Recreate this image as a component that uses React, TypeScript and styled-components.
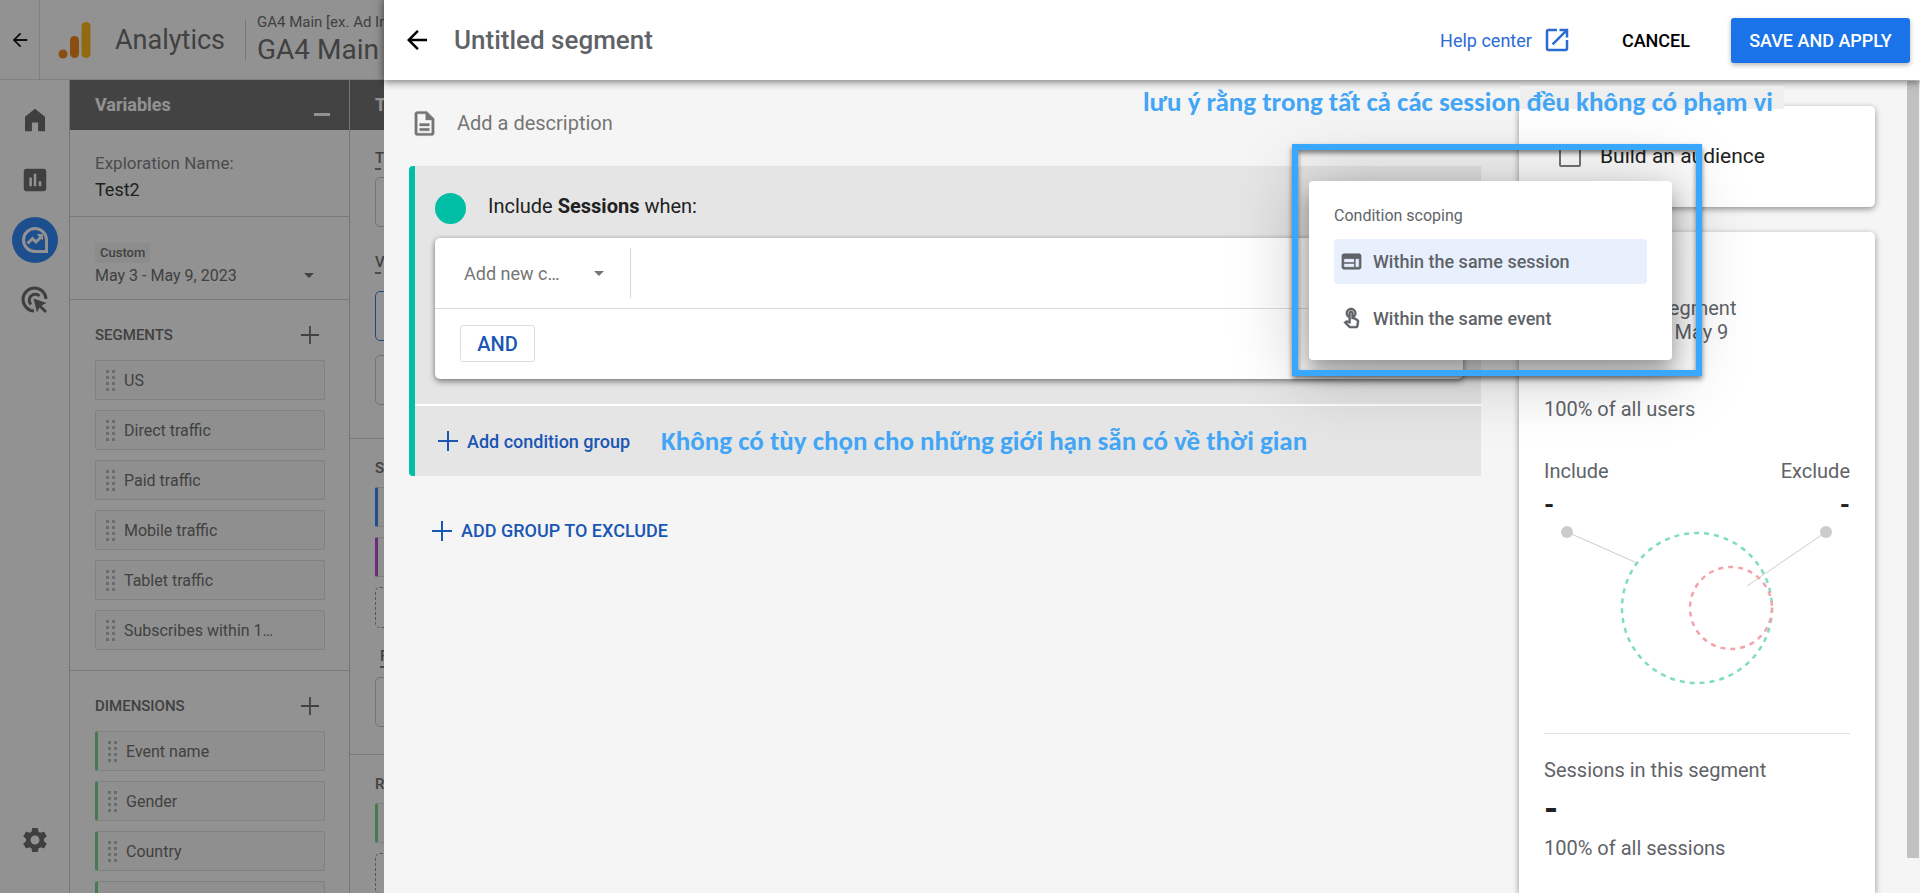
import React from 'react';
import styled, { createGlobalStyle } from 'styled-components';

const Global = createGlobalStyle`
  *, *::before, *::after { box-sizing: border-box; }
  html, body { margin: 0; height: 100%; overflow: hidden; }
  body { font-family: Roboto, "Liberation Sans", sans-serif; color: #5f6368; }
  #root { height: 100%; }
  button, input, select { font-family: inherit; }
  h1, h2, h3, p, ul { margin: 0; padding: 0; font-weight: 400; }
  li { list-style: none; }
`;

const Stage = styled.div`
  position: relative;
  height: 100vh;
  overflow: hidden;
  background: #fff;
`;

/* ---------- page behind the drawer ---------- */

const Page = styled.div`
  display: flex;
  flex-direction: column;
  height: 100%;
`;

const PageHeader = styled.header`
  display: flex;
  align-items: center;
  flex: none;
  height: 80px;
  border-bottom: 1px solid #dadce0;
  white-space: nowrap;
`;

const BackCell = styled.button`
  display: flex;
  align-items: center;
  justify-content: center;
  width: 40px;
  height: 100%;
  padding: 0;
  background: none;
  border: 0;
  border-right: 1px solid #dadce0;
`;

const Brand = styled.div`
  display: flex;
  align-items: center;
  gap: 23px;
  padding: 0 20px 0 18px;
  font-size: 27px;
  line-height: 40px;
  color: #606060;
`;

const Property = styled.div`
  display: flex;
  flex-direction: column;
  height: 40px;
  justify-content: center;
  padding: 0 0 4px 11px;
  border-left: 1px solid #c4c6ca;
  color: #606060;
`;

const PropertySmall = styled.span`
  font-size: 15px;
  line-height: 24px;
`;

const PropertyLarge = styled.span`
  font-size: 28px;
  line-height: 32px;
`;

const PageBody = styled.div`
  display: flex;
  flex: 1;
  min-height: 0;
  color: #606060;
`;

const Rail = styled.nav`
  display: flex;
  flex-direction: column;
  align-items: center;
  flex: none;
  width: 70px;
  padding: 17px 0 30px;
  border-right: 1px solid #c4c4c4;
`;

const RailButton = styled.button<{ $active?: boolean; $last?: boolean }>`
  display: flex;
  align-items: center;
  justify-content: center;
  flex: none;
  width: 46px;
  height: 46px;
  margin: ${p => (p.$last ? 'auto 0 0' : '0 0 14px')};
  padding: 0;
  border: 0;
  border-radius: 50%;
  background: ${p => (p.$active ? '#1a7af5' : 'transparent')};
  color: ${p => (p.$active ? '#fff' : '#5c5c5c')};
`;

const Column = styled.section`
  flex: none;
  width: 280px;
  border-right: 1px solid #c4c4c4;
  overflow: hidden;
`;

const ColumnHead = styled.div`
  display: flex;
  justify-content: space-between;
  height: 50px;
  padding: 11px 19px 0 25px;
  background: #656565;
  color: #fff;
`;

const ColumnTitle = styled.h2`
  font-size: 18px;
  line-height: 28px;
  font-weight: 700;
`;

const Minimize = styled.button`
  width: 16px;
  height: 25px;
  padding: 0;
  background: none;
  border: 0;
  border-bottom: 3px solid #fff;
`;

const Block = styled.div<{ $pad: string }>`
  padding: ${p => p.$pad};
  border-bottom: 1px solid #cfcfcf;
`;

const Label = styled.label`
  display: block;
  font-size: 17px;
  line-height: 26px;
  color: #757575;
`;

const NameInput = styled.input`
  display: block;
  width: 100%;
  height: 26px;
  padding: 0;
  border: 0;
  background: none;
  font-size: 18px;
  color: #212121;
`;

const Chip = styled.span`
  display: inline-block;
  padding: 0 5px;
  background: #f3f3f3;
  border-radius: 2px;
  font-size: 13px;
  line-height: 20px;
  font-weight: 500;
`;

const DateButton = styled.button`
  display: flex;
  align-items: center;
  justify-content: space-between;
  width: 100%;
  height: 24px;
  padding: 0 11px 0 0;
  border: 0;
  background: none;
  font-size: 16px;
  color: inherit;
`;

const Caret = styled.span`
  border: 5px solid transparent;
  border-top-color: currentColor;
  border-bottom-width: 0;
`;

const GroupHead = styled.div`
  display: flex;
  align-items: center;
  justify-content: space-between;
  height: 24px;
  padding-right: 6px;
`;

const GroupTitle = styled.h3`
  font-size: 15px;
  line-height: 24px;
  font-weight: 500;
`;

const IconButton = styled.button<{ $dark?: boolean }>`
  display: flex;
  padding: 0;
  border: 0;
  background: none;
  color: ${p => (p.$dark ? '#000' : '#5f6368')};
`;

const TagList = styled.ul<{ $top?: string }>`
  display: flex;
  flex-direction: column;
  gap: 10px;
  margin-top: ${p => p.$top || '13px'};
`;

const Tag = styled.li<{ $accent?: string }>`
  display: flex;
  align-items: center;
  gap: 7px;
  height: 40px;
  padding-left: 9px;
  border: 1px solid #dcdcdc;
  border-left: ${p => (p.$accent ? `3px solid ${p.$accent}` : '1px solid #dcdcdc')};
  border-radius: 2px;
  background: #fafafa;
  font-size: 16px;
  white-space: nowrap;
`;

const SettingName = styled.h3<{ $top?: string; $inset?: boolean }>`
  width: max-content;
  margin-top: ${p => p.$top || '0'};
  margin-left: ${p => (p.$inset ? '5px' : '0')};
  border-bottom: 2px dashed #757575;
  font-size: 15px;
  line-height: 20px;
  font-weight: 500;
  white-space: nowrap;
`;

const Slot = styled.div<{ $tone?: string; $dashed?: boolean; $top: string }>`
  height: ${p => (p.$dashed ? '41px' : '50px')};
  margin-top: ${p => p.$top};
  border: 1px ${p => (p.$dashed ? 'dashed #8a8a8a' : `solid ${p.$tone || '#c4c4c4'}`)};
  border-radius: 5px;
`;

const Scrim = styled.div`
  position: absolute;
  inset: 0;
  background: rgba(32, 32, 32, 0.49);
`;

/* ---------- drawer ---------- */

const Drawer = styled.main`
  position: absolute;
  inset: 0 0 0 384px;
  display: flex;
  flex-direction: column;
  background: #f5f5f5;
`;

const DrawerHeader = styled.header`
  position: relative;
  z-index: 1;
  display: flex;
  align-items: center;
  flex: none;
  height: 80px;
  padding: 0 10px 0 18px;
  background: #fff;
  box-shadow: 0 1px 8px 1px rgba(0, 0, 0, 0.5);
`;

const DrawerTitle = styled.h1`
  flex: 1;
  margin-left: 22px;
  font-size: 26px;
  line-height: 32px;
  font-weight: 500;
`;

const HelpLink = styled.a`
  display: flex;
  align-items: center;
  gap: 10px;
  margin-right: 50px;
  color: #2a6bd4;
  font-size: 18px;
  text-decoration: none;
`;

const CancelButton = styled.button`
  margin-right: 41px;
  padding: 0;
  border: 0;
  background: none;
  color: #000;
  font-size: 18px;
  font-weight: 500;
`;

const ApplyButton = styled.button`
  width: 179px;
  height: 45px;
  padding: 0;
  border: 0;
  border-radius: 3px;
  background: #1a73e8;
  box-shadow: 0 2px 5px rgba(0, 0, 0, 0.3);
  color: #fff;
  font-size: 18px;
  font-weight: 500;
  white-space: nowrap;
`;

const DrawerBody = styled.div`
  display: flex;
  flex: 1;
  min-height: 0;
`;

const Builder = styled.div`
  flex: 1;
  min-width: 0;
  padding: 24px 38px 0 25px;
`;

const DescriptionRow = styled.label`
  display: flex;
  align-items: center;
  gap: 18px;
  height: 38px;
  padding-left: 1px;
  color: #757575;
`;

const DescriptionInput = styled.input`
  flex: 1;
  padding: 0;
  border: 0;
  background: none;
  font-size: 20px;
  &::placeholder { color: #757575; opacity: 1; }
`;

const Group = styled.section`
  margin-top: 24px;
  border-left: 6px solid #00bfa5;
  border-radius: 4px 0 0 4px;
  background: #e5e5e5;
`;

const Conditions = styled.div`
  padding: 22px 18px 25px 20px;
  border-bottom: 2px solid #fff;
`;

const GroupLine = styled.h2`
  display: flex;
  align-items: center;
  gap: 22px;
  height: 36px;
  color: #212121;
  font-size: 20px;
  line-height: 32px;
`;

const Dot = styled.span`
  width: 31px;
  height: 31px;
  margin-top: 4px;
  border-radius: 50%;
  background: #00bfa5;
`;

const Card = styled.div`
  margin-top: 14px;
  border-radius: 5px;
  background: #fff;
  box-shadow: 0 3px 6px rgba(0, 0, 0, 0.38), 0 0 4px rgba(0, 0, 0, 0.2);
`;

const ConditionRow = styled.div`
  height: 71px;
  padding-top: 10px;
  border-bottom: 1px solid #dcdcdc;
`;

const NewCondition = styled.button`
  display: flex;
  align-items: center;
  justify-content: space-between;
  width: 196px;
  height: 50px;
  padding: 0 26px 0 29px;
  border: 0;
  border-right: 1px solid #d6d6d6;
  background: none;
  color: #757575;
  font-size: 18px;
`;

const AndRow = styled.div`
  padding: 16px 25px 17px;
`;

const AndButton = styled.button`
  display: block;
  width: 75px;
  height: 37px;
  padding: 0;
  border: 1px solid #dadce0;
  border-radius: 3px;
  background: #fff;
  color: #1a56b4;
  font-size: 20px;
  font-weight: 500;
`;

const GroupFooter = styled.div`
  display: flex;
  align-items: center;
  gap: 31px;
  height: 70px;
  padding-left: 23px;
`;

const AddButton = styled.button`
  display: flex;
  align-items: center;
  gap: 9px;
  padding: 0;
  border: 0;
  background: none;
  color: #1a56b4;
  font-size: 18px;
  font-weight: 500;
  white-space: nowrap;
`;

const ExcludeRow = styled.div`
  padding: 44px 0 0 23px;
`;

const Note = styled.p`
  color: #42a5f5;
  font-family: Carlito, Lato, "Noto Sans", sans-serif;
  font-size: 27px;
  line-height: 32px;
  font-weight: 700;
  white-space: nowrap;
`;

const Side = styled.aside`
  display: flex;
  flex-direction: column;
  gap: 25px;
  flex: none;
  width: 356px;
  margin-right: 32px;
  padding-top: 26px;
`;

const SideCard = styled.section<{ $grow?: boolean }>`
  flex: ${p => (p.$grow ? '1' : 'none')};
  padding: ${p => (p.$grow ? '64px 25px 0' : '0')};
  border-radius: ${p => (p.$grow ? '5px 5px 0 0' : '5px')};
  background: #fff;
  box-shadow: 0 2px 6px rgba(0, 0, 0, 0.42);
`;

const Audience = styled.label`
  display: flex;
  align-items: center;
  gap: 19px;
  height: 101px;
  padding: 0 0 2px 40px;
  color: #212121;
  font-size: 21px;
`;

const Tick = styled.input`
  appearance: none;
  width: 22px;
  height: 22px;
  margin: 0;
  border: 2px solid #757575;
  border-radius: 2px;
`;

const SummaryText = styled.p`
  font-size: 20px;
  line-height: 24px;
`;

const Share = styled(SummaryText)`
  margin-top: 53px;
`;

const Split = styled.div<{ $top: string }>`
  display: flex;
  justify-content: space-between;
  margin-top: ${p => p.$top};
  font-size: 20px;
  line-height: 24px;
`;

const Value = styled.strong<{ $big?: boolean }>`
  display: block;
  font-size: ${p => (p.$big ? '36px' : '26px')};
  line-height: 24px;
  font-weight: 700;
  color: #212121;
`;

const Chart = styled.svg`
  display: block;
  width: 306px;
  height: 175px;
`;

const Totals = styled.div`
  display: flex;
  flex-direction: column;
  gap: 15px;
  margin-top: 41px;
  padding-top: 24px;
  border-top: 1px solid #e0e0e0;
`;

const ScrollTrack = styled.div`
  flex: none;
  width: 13px;
  padding-top: 1px;
`;

const ScrollThumb = styled.div`
  width: 12px;
  height: calc(100% - 35px);
  background: #c1c1c1;
`;

/* ---------- overlays ---------- */

const TopNote = styled(Note)`
  position: absolute;
  z-index: 2;
  top: 86px;
  right: 136px;
  padding-right: 11px;
  background: linear-gradient(#efefef, #efefef) top right / 264px 23px no-repeat;
`;

const Frame = styled.div`
  position: absolute;
  z-index: 3;
  top: 144px;
  right: 218px;
  width: 410px;
  height: 232px;
  border: 6px solid #38a7ff;
  box-shadow: 0 3px 5px rgba(0, 0, 0, 0.5), inset 0 3px 5px rgba(0, 0, 0, 0.5);
  pointer-events: none;
`;

const Menu = styled.div`
  position: absolute;
  z-index: 2;
  top: 181px;
  right: 248px;
  width: 363px;
  height: 179px;
  padding: 22px 25px 0;
  border-radius: 4px;
  background: #fff;
  box-shadow: 0 12px 20px rgba(0, 0, 0, 0.3), 0 6px 70px 10px rgba(0, 0, 0, 0.22);
`;

const MenuTitle = styled.h3`
  font-size: 16px;
  line-height: 26px;
`;

const MenuItems = styled.div`
  display: flex;
  flex-direction: column;
  gap: 12px;
  margin-top: 10px;
`;

const MenuItem = styled.button<{ $selected?: boolean }>`
  display: flex;
  align-items: center;
  gap: 10px;
  height: 45px;
  padding: 0 6px;
  border: 0;
  border-radius: 4px;
  background: ${p => (p.$selected ? '#e8f0fe' : 'transparent')};
  color: #5f6368;
  font-size: 18px;
  font-weight: 500;
`;

/* ---------- icons ---------- */

const Icon = ({ d, size = 24, bold = 0 }: { d: string; size?: number; bold?: number }) => (
  <svg
    width={size}
    height={size}
    viewBox="0 0 24 24"
    fill="currentColor"
    stroke={bold ? 'currentColor' : 'none'}
    strokeWidth={bold}
    aria-hidden="true"
  >
    <path d={d} fillRule="evenodd" />
  </svg>
);

const ARROW = 'M20 11H7.83l5.59-5.59L12 4l-8 8 8 8 1.41-1.41L7.83 13H20v-2z';
const HOME = 'M4 9.3 12 3l8 6.3V21h-5.500v-7h-5v7H4z';
const REPORT = 'M19 3H5c-1.100 0-2 .9-2 2v14c0 1.100.9 2 2 2h14c1.100 0 2-.9 2-2V5c0-1.100-.9-2-2-2zM9.500 17h-2v-7h2v7zm3.500 0h-2V7h2v10zm4 0h-2v-4h2v4z';
const GEAR =
  'M19.14 12.94c.04-.3.06-.61.06-.94 0-.32-.02-.64-.07-.94l2.03-1.58c.18-.14.23-.41.12-.61l-1.92-3.32c-.12-.22-.37-.29-.59-.22l-2.39.96c-.5-.38-1.03-.7-1.62-.94l-.36-2.54c-.04-.24-.24-.41-.48-.41h-3.84c-.24 0-.43.17-.47.41l-.36 2.54c-.59.24-1.13.57-1.62.94l-2.39-.96c-.22-.08-.47 0-.59.22L2.74 8.870c-.12.21-.08.47.12.61l2.03 1.58c-.05.3-.09.63-.09.94s.02.64.07.94l-2.03 1.580c-.18.14-.23.41-.12.61l1.920 3.320c.12.22.37.29.59.22l2.39-.96c.5.38 1.03.7 1.620.94l.36 2.540c.05.24.24.41.48.41h3.840c.24 0 .44-.17.47-.41l.36-2.540c.59-.24 1.130-.56 1.620-.94l2.390.96c.22.08.47 0 .59-.22l1.920-3.320c.12-.22.07-.47-.12-.61l-2.010-1.580zM12 15.600c-1.980 0-3.600-1.620-3.600-3.600s1.620-3.600 3.600-3.600 3.600 1.620 3.600 3.600-1.620 3.600-3.600 3.600z';
const NEW_TAB = 'M19 19H5V5h7V3H5c-1.110 0-2 .9-2 2v14c0 1.100.89 2 2 2h14c1.100 0 2-.9 2-2v-7h-2v7zM14 3v2h3.590l-9.830 9.830 1.410 1.410L19 6.410V10h2V3h-7z';
const DOC = 'M8 16h8v2H8zm0-4h8v2H8zm6-10H6c-1.100 0-2 .9-2 2v16c0 1.100.89 2 1.990 2H18c1.100 0 2-.9 2-2V8l-6-6zm4 18H6V4h7v5h5v11z';
const WEB = 'M20 4H4c-1.100 0-1.990.9-1.990 2L2 18c0 1.100.9 2 2 2h16c1.100 0 2-.9 2-2V6c0-1.100-.9-2-2-2zm-5 14H4v-4h11v4zm0-5H4V9h11v4zm5 5h-4V9h4v9z';
const TOUCH =
  'M18.190 12.440l-3.240-1.620c1.290-1 2.120-2.560 2.120-4.320 0-3.030-2.470-5.500-5.500-5.500s-5.500 2.470-5.500 5.500c0 2.130 1.220 3.980 3 4.890v3.260c-2.150-.46-2.020-.44-2.260-.44-.53 0-1.030.21-1.410.59L4 16.220l5.090 5.090c.43.44 1.030.69 1.650.69h6.300c.98 0 1.810-.7 1.970-1.670l.8-4.710c.22-1.300-.43-2.580-1.620-3.180zm-.35 2.850l-.8 4.710h-6.300c-.09 0-.17-.04-.24-.1l-3.680-3.680 4.250.89V6.500c0-.28.22-.5.5-.5s.5.22.5.5v6h1.760l3.460 1.730c.4.2.62.63.55 1.060zM8.070 6.500c0-1.930 1.570-3.500 3.500-3.500s3.500 1.570 3.500 3.500c0 .95-.38 1.810-1 2.440V6.500c0-1.380-1.120-2.500-2.500-2.500s-2.500 1.120-2.500 2.500v2.440c-.62-.63-1-1.490-1-2.440z';

const Plus = ({ size = 20 }: { size?: number }) => (
  <svg width={size} height={size} viewBox="0 0 20 20" stroke="currentColor" strokeWidth="2" aria-hidden="true">
    <path d="M10 0v20M0 10h20" />
  </svg>
);

const Logo = () => (
  <svg width="34" height="38" viewBox="0 0 34 38" aria-hidden="true">
    <circle cx="5" cy="33" r="4.500" fill="#ee7a00" />
    <rect x="12" y="15" width="9" height="22" rx="4.500" fill="#ee7a00" />
    <rect x="23.500" y="1" width="9" height="36" rx="4.500" fill="#fdb005" />
  </svg>
);

const Explore = () => (
  <svg width="28" height="28" viewBox="0 0 28 28" fill="none" stroke="currentColor" strokeWidth="3" aria-hidden="true">
    <path d="M14 25.500A11.500 11.500 0 1 1 25.500 14v11.500z" />
    <path d="M6.500 17.500l5-5 3.500 3.500 5-5" />
    <path d="M16.500 8.500h5v5z" fill="currentColor" strokeWidth="1" />
    <circle cx="22.500" cy="23" r="1" fill="#1a7af5" stroke="none" />
  </svg>
);

const Advertising = () => (
  <svg width="28" height="28" viewBox="0 0 28 28" fill="none" stroke="currentColor" strokeWidth="3" aria-hidden="true">
    <path d="M13 25A11.500 11.500 0 1 1 25 13" />
    <path d="M10 18.500A6 6 0 1 1 18.500 10" />
    <path d="M12.500 12.500l13 4.500-5 2.500 5.500 5.500-2 2-5.500-5.500-2.500 5z" fill="currentColor" stroke="none" />
  </svg>
);

const Grip = () => (
  <svg width="12" height="22" viewBox="0 0 12 22" fill="#b4b4b4" aria-hidden="true">
    {[0, 6, 12, 18].map(y => (
      <React.Fragment key={y}>
        <rect x="1" y={y + 1} width="3" height="3" />
        <rect x="7" y={y + 1} width="3" height="3" />
      </React.Fragment>
    ))}
  </svg>
);

const segments = ['US', 'Direct traffic', 'Paid traffic', 'Mobile traffic', 'Tablet traffic', 'Subscribes within 1…'];
const dimensions = ['Event name', 'Gender', 'Country'];
const GREEN = '#6bd07f';

export default function App() {
  return (
    <Stage>
      <Global />
      <Page>
        <PageHeader>
          <BackCell aria-label="Back"><Icon d={ARROW} size={22} /></BackCell>
          <Brand><Logo />Analytics</Brand>
          <Property>
            <PropertySmall>GA4 Main [ex. Ad Int]</PropertySmall>
            <PropertyLarge>GA4 Main</PropertyLarge>
          </Property>
        </PageHeader>
        <PageBody>
          <Rail>
            <RailButton aria-label="Home"><Icon d={HOME} size={30} /></RailButton>
            <RailButton aria-label="Reports"><Icon d={REPORT} size={30} /></RailButton>
            <RailButton aria-label="Explore" $active><Explore /></RailButton>
            <RailButton aria-label="Advertising"><Advertising /></RailButton>
            <RailButton aria-label="Admin" $last><Icon d={GEAR} size={30} /></RailButton>
          </Rail>
          <Column>
            <ColumnHead>
              <ColumnTitle>Variables</ColumnTitle>
              <Minimize aria-label="Minimize variables" />
            </ColumnHead>
            <Block $pad="20px 24px 14px 25px">
              <Label htmlFor="exploration">Exploration Name:</Label>
              <NameInput id="exploration" defaultValue="Test2" />
            </Block>
            <Block $pad="25px 24px 12px 25px">
              <Chip>Custom</Chip>
              <DateButton>May 3 - May 9, 2023<Caret /></DateButton>
            </Block>
            <Block $pad="23px 24px 20px 25px">
              <GroupHead>
                <GroupTitle>SEGMENTS</GroupTitle>
                <IconButton aria-label="Add segment"><Plus size={18} /></IconButton>
              </GroupHead>
              <TagList>
                {segments.map(s => <Tag key={s}><Grip />{s}</Tag>)}
              </TagList>
            </Block>
            <Block $pad="23px 24px 20px 25px">
              <GroupHead>
                <GroupTitle>DIMENSIONS</GroupTitle>
                <IconButton aria-label="Add dimension"><Plus size={18} /></IconButton>
              </GroupHead>
              <TagList>
                {dimensions.map(s => <Tag key={s} $accent={GREEN}><Grip />{s}</Tag>)}
                <Tag $accent={GREEN} />
              </TagList>
            </Block>
          </Column>
          <Column>
            <ColumnHead><ColumnTitle>Tab Settings</ColumnTitle></ColumnHead>
            <Block $pad="18px 24px 33px 25px">
              <SettingName>TECHNIQUE</SettingName>
              <Slot $top="7px" />
              <SettingName $top="25px">VISUALIZATION</SettingName>
              <Slot $top="17px" $tone="#1a73e8" />
              <Slot $top="14px" />
            </Block>
            <Block $pad="17px 24px 27px 25px">
              <GroupTitle>SEGMENT COMPARISONS</GroupTitle>
              <TagList $top="7px">
                <Tag $accent="#1a7af5" />
                <Tag $accent="#b233cc" />
              </TagList>
              <Slot $top="10px" $dashed />
              <SettingName $top="18px" $inset>FILTERS</SettingName>
              <Slot $top="9px" />
            </Block>
            <Block $pad="17px 24px 27px 25px">
              <GroupTitle>ROWS</GroupTitle>
              <TagList $top="7px">
                <Tag $accent={GREEN} />
              </TagList>
              <Slot $top="10px" $dashed />
            </Block>
          </Column>
        </PageBody>
      </Page>
      <Scrim />

      <Drawer>
        <DrawerHeader>
          <IconButton aria-label="Close segment builder" $dark><Icon d={ARROW} size={30} /></IconButton>
          <DrawerTitle>Untitled segment</DrawerTitle>
          <HelpLink href="#help">Help center<Icon d={NEW_TAB} size={30} /></HelpLink>
          <CancelButton>CANCEL</CancelButton>
          <ApplyButton>SAVE AND APPLY</ApplyButton>
        </DrawerHeader>
        <DrawerBody>
          <Builder>
            <DescriptionRow>
              <Icon d={DOC} size={29} bold={0.3} />
              <DescriptionInput aria-label="Description" placeholder="Add a description" />
            </DescriptionRow>
            <Group>
              <Conditions>
                <GroupLine><Dot /><span>Include <b>Sessions</b> when:</span></GroupLine>
                <Card>
                  <ConditionRow>
                    <NewCondition>Add new c…<Caret /></NewCondition>
                  </ConditionRow>
                  <AndRow><AndButton>AND</AndButton></AndRow>
                </Card>
              </Conditions>
              <GroupFooter>
                <AddButton><Plus />Add condition group</AddButton>
                <Note>Không có tùy chọn cho những giới hạn sẵn có về thời gian</Note>
              </GroupFooter>
            </Group>
            <ExcludeRow>
              <AddButton><Plus />ADD GROUP TO EXCLUDE</AddButton>
            </ExcludeRow>
          </Builder>
          <Side>
            <SideCard>
              <Audience><Tick type="checkbox" />Build an audience</Audience>
            </SideCard>
            <SideCard $grow>
              <SummaryText>Users in this segment</SummaryText>
              <SummaryText>during May 3 - May 9</SummaryText>
              <Share>100% of all users</Share>
              <Split $top="38px"><span>Include</span><span>Exclude</span></Split>
              <Split $top="10px"><Value>-</Value><Value>-</Value></Split>
              <Chart viewBox="0 0 306 175" fill="none">
                <path d="M23 15l70 31M282 15l-79 54" stroke="#ccc" />
                <circle cx="23" cy="15" r="6" fill="#ccc" />
                <circle cx="282" cy="15" r="6" fill="#ccc" />
                <circle cx="153" cy="91" r="75" stroke="#7fdcc0" strokeWidth="2.5" strokeDasharray="5 5" />
                <circle cx="187" cy="91" r="41" stroke="#f4a3a8" strokeWidth="2.5" strokeDasharray="5 5" />
              </Chart>
              <Totals>
                <SummaryText>Sessions in this segment</SummaryText>
                <Value $big>-</Value>
                <SummaryText>100% of all sessions</SummaryText>
              </Totals>
            </SideCard>
          </Side>
          <ScrollTrack><ScrollThumb /></ScrollTrack>
        </DrawerBody>

        <TopNote>lưu ý rằng trong tất cả các session đều không có phạm vi</TopNote>
        <Menu aria-label="Condition scoping">
          <MenuTitle>Condition scoping</MenuTitle>
          <MenuItems>
            <MenuItem $selected><Icon d={WEB} size={23} bold={0.6} />Within the same session</MenuItem>
            <MenuItem><Icon d={TOUCH} size={23} bold={0.5} />Within the same event</MenuItem>
          </MenuItems>
        </Menu>
        <Frame />
      </Drawer>
    </Stage>
  );
}
